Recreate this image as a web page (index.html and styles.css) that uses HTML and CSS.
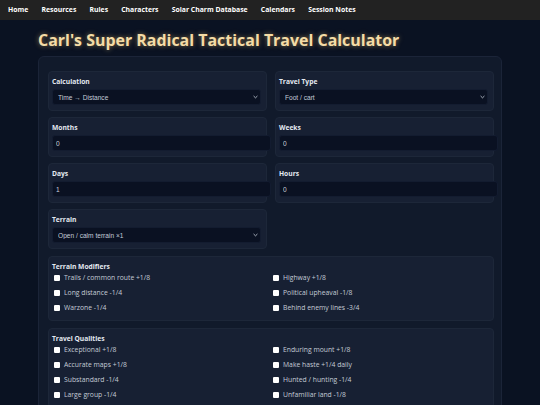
FILE: index.html
```html
<!DOCTYPE html>
<html lang="en">
<head>
<meta charset="utf-8">
<title>Travel Calculator</title>
<link rel="stylesheet" href="styles.css">
</head>
<body>
<nav class="topnav">
  <a href="#">Home</a>
  <a href="#">Resources</a>
  <a href="#">Rules</a>
  <a href="#">Characters</a>
  <a href="#">Solar Charm Database</a>
  <a href="#">Calendars</a>
  <a href="#">Session Notes</a>
</nav>
<main class="page">
  <h1 class="title">Carl's Super Radical Tactical Travel Calculator</h1>
  <section class="panel">
    <div class="grid">
      <div class="field">
        <label class="lbl">Calculation</label>
        <div class="selwrap">
          <select class="sel"><option>Time → Distance</option></select>
          <svg class="chev" viewBox="0 0 6 4" width="5" height="4"><path d="M0.7 0.8 L3 3 L5.3 0.8" fill="none" stroke="#c9d0dc" stroke-width="1"/></svg>
        </div>
      </div>
      <div class="field">
        <label class="lbl">Travel Type</label>
        <div class="selwrap">
          <select class="sel"><option>Foot / cart</option></select>
          <svg class="chev" viewBox="0 0 6 4" width="5" height="4"><path d="M0.7 0.8 L3 3 L5.3 0.8" fill="none" stroke="#c9d0dc" stroke-width="1"/></svg>
        </div>
      </div>
      <div class="field">
        <label class="lbl">Months</label>
        <input class="inp" type="text" value="0">
      </div>
      <div class="field">
        <label class="lbl">Weeks</label>
        <input class="inp" type="text" value="0">
      </div>
      <div class="field">
        <label class="lbl">Days</label>
        <input class="inp" type="text" value="1">
      </div>
      <div class="field">
        <label class="lbl">Hours</label>
        <input class="inp" type="text" value="0">
      </div>
      <div class="field">
        <label class="lbl">Terrain</label>
        <div class="selwrap">
          <select class="sel"><option>Open / calm terrain ×1</option></select>
          <svg class="chev" viewBox="0 0 6 4" width="5" height="4"><path d="M0.7 0.8 L3 3 L5.3 0.8" fill="none" stroke="#c9d0dc" stroke-width="1"/></svg>
        </div>
      </div>
      <div class="spacer"></div>
      <div class="field wide">
        <div class="lbl">Terrain Modifiers</div>
        <div class="checks">
          <label class="chk"><input type="checkbox"> Trails / common route +1/8</label>
          <label class="chk"><input type="checkbox"> Highway +1/8</label>
          <label class="chk"><input type="checkbox"> Long distance -1/4</label>
          <label class="chk"><input type="checkbox"> Political upheaval -1/8</label>
          <label class="chk"><input type="checkbox"> Warzone -1/4</label>
          <label class="chk"><input type="checkbox"> Behind enemy lines -3/4</label>
        </div>
      </div>
      <div class="field wide">
        <div class="lbl">Travel Qualities</div>
        <div class="checks">
          <label class="chk"><input type="checkbox"> Exceptional +1/8</label>
          <label class="chk"><input type="checkbox"> Enduring mount +1/8</label>
          <label class="chk"><input type="checkbox"> Accurate maps +1/8</label>
          <label class="chk"><input type="checkbox"> Make haste +1/4 daily</label>
          <label class="chk"><input type="checkbox"> Substandard -1/4</label>
          <label class="chk"><input type="checkbox"> Hunted / hunting -1/4</label>
          <label class="chk"><input type="checkbox"> Large group -1/4</label>
          <label class="chk"><input type="checkbox"> Unfamiliar land -1/8</label>
        </div>
      </div>
    </div>
  </section>
</main>
</body>
</html>
```

FILE: styles.css
```css
* { box-sizing: border-box; }
html, body { margin: 0; padding: 0; }
body {
  background: #0a1222;
  font-family: "Open Sans", "Noto Sans", sans-serif;
  color: #dfe5ee;
  height: 405px;
  overflow: hidden;
}
.topnav {
  display: flex;
  align-items: center;
  height: 20px;
  background: #222222;
  padding-left: 1.5px;
}
.topnav a {
  color: #ffffff;
  text-decoration: none;
  font-weight: 700;
  font-size: 6.85px;
  padding: 0 6.6px;
  line-height: 20px;
}
.page {
  padding: 0 38px;
}
.title {
  margin: 9px 0 5px;
  font-size: 15.95px;
  line-height: 22px;
  font-weight: 700;
  color: #f4dca6;
  text-shadow: 0 0 5px rgba(238, 196, 110, 0.55);
}
.panel {
  width: 464px;
  background: #111a2b;
  border: 1px solid #1b2438;
  border-radius: 6px;
  padding: 14px 7px 10px 9px;
}
.grid {
  display: grid;
  grid-template-columns: 219px 219px;
  column-gap: 8px;
  row-gap: 6px;
}
.field {
  background: #172033;
  border: 1px solid #1d2739;
  border-radius: 4px;
  padding: 5px 3px 5px 3px;
}
.wide {
  grid-column: 1 / span 2;
  margin-top: 1px;
  padding-bottom: 5px;
}
.lbl {
  display: block;
  font-size: 6.7px;
  font-weight: 700;
  color: #e4e9f1;
  line-height: 10px;
  margin-bottom: 2px;
}
.selwrap {
  position: relative;
  width: 209px;
}
.sel {
  appearance: none;
  -webkit-appearance: none;
  display: block;
  width: 100%;
  height: 16px;
  background: #0a1122;
  border: 1px solid #131c30;
  border-radius: 3px;
  color: #c3cbd8;
  font-family: "Liberation Sans", Arial, sans-serif;
  font-size: 6.6px;
  padding: 0 5px;
}
.chev {
  position: absolute;
  right: 3px;
  top: 6px;
}
.inp {
  display: block;
  width: 219px;
  height: 16px;
  background: #0a1122;
  border: 1px solid #131c30;
  border-radius: 3px;
  color: #c9d0dc;
  font-family: "Liberation Sans", Arial, sans-serif;
  font-size: 6.6px;
  padding: 0 3px;
}
.checks {
  display: grid;
  grid-template-columns: 219px 219px;
  margin-top: -4px;
}
.chk {
  display: flex;
  align-items: center;
  height: 15px;
  font-size: 6.8px;
  color: #c4cbd6;
  padding-left: 2px;
}
.chk input {
  appearance: none;
  -webkit-appearance: none;
  width: 6px;
  height: 6px;
  margin: 0 4px 0 0;
  background: #ffffff;
  border-radius: 1px;
}
```
